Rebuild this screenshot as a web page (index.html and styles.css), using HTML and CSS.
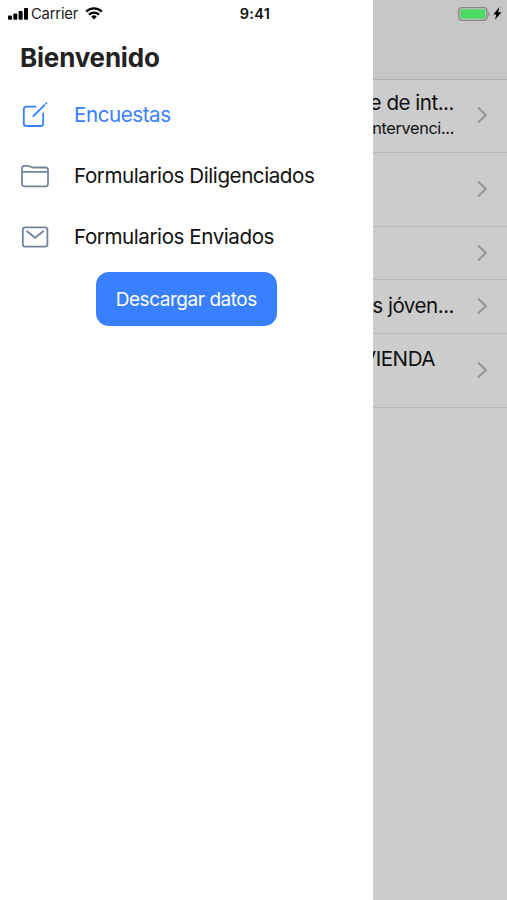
FILE: index.html
```
<!DOCTYPE html>
<html lang="es">
<head>
<meta charset="UTF-8">
<meta name="viewport" content="width=device-width, initial-scale=1.0">
<title>Bienvenido</title>
<link rel="stylesheet" href="styles.css">
</head>
<body>

<div class="statusbar">
  <div class="carrier">
    <svg class="signal" width="20" height="12" viewBox="0 0 20 12">
      <rect x="0" y="7.5" width="4" height="4.2" rx="1"/>
      <rect x="5.3" y="5.5" width="4" height="6.2" rx="1"/>
      <rect x="10.6" y="3" width="4" height="8.7" rx="1"/>
      <rect x="16" y="0" width="4" height="11.7" rx="1"/>
    </svg>
    <span>Carrier</span>
    <svg class="wifi" width="18" height="13" viewBox="0 0 18 13">
      <path d="M1.2 4.6a11 11 0 0 1 15.6 0M4 7.6a7.1 7.1 0 0 1 10 0" fill="none" stroke="#000" stroke-width="2.3"/>
      <path d="M9 12.4L6.2 9.7a4 4 0 0 1 5.6 0z"/>
    </svg>
  </div>
  <span class="time">9:41</span>
  <div class="power">
    <svg width="33" height="14" viewBox="0 0 33 14">
      <rect x=".7" y=".7" width="28.2" height="12.6" rx="3" fill="none" stroke="#858585" stroke-width="1.3"/>
      <rect x="2.3" y="2.3" width="25" height="9.4" rx="1.4" fill="#4cd964"/>
      <path d="M30.3 4.6c1.8.6 1.8 4.2 0 4.8z" fill="#858585"/>
    </svg>
    <svg width="9" height="13" viewBox="0 0 9 13">
      <path d="M6.4 0L.3 7.4h3L2 12.8 8.5 5.3H5.2z"/>
    </svg>
  </div>
</div>

<div class="app">
  <!-- Side menu -->
  <nav class="menu">
    <h1>Bienvenido</h1>
    <ul>
      <li class="active">
        <svg width="28" height="28" viewBox="0 0 28 28">
          <path d="M14.5 5.6H5.4A2.6 2.6 0 0 0 2.8 8.2v14.2A2.6 2.6 0 0 0 5.400 25H19.600a2.600 2.600 0 0 0 2.600-2.600v-10M12.400 15L23.400 4.200M25.100 2.500l.4-.4"/>
        </svg>
        <a href="#encuestas">Encuestas</a>
      </li>
      <li>
        <svg width="28" height="28" viewBox="0 0 28 28">
          <path d="M1 9V6.200a2.400 2.400 0 0 1 2.400-2.400h3.800c2 0 2.600 1.700 4.600 1.700h12.800A2.400 2.400 0 0 1 27 7.900V9M1 9.800h26M1 9v13a2.400 2.400 0 0 0 2.400 2.400h21.200A2.400 2.400 0 0 0 27 22V9"/>
        </svg>
        <a href="#diligenciados">Formularios Diligenciados</a>
      </li>
      <li>
        <svg width="28" height="28" viewBox="0 0 28 28">
          <rect x="1.800" y="4.400" width="24.600" height="19.200" rx="2.400"/>
          <path d="M6 8.200l8.100 6.500 8.100-6.500"/>
        </svg>
        <a href="#enviados">Formularios Enviados</a>
      </li>
    </ul>
    <button class="download">Descargar datos</button>
  </nav>

  <!-- Page behind the menu -->
  <main class="page">
    <div class="toolbar"></div>
    <div class="item tall">
      <div class="label"><p>e de int...</p><small>ntervenci...</small></div>
      <svg width="12" height="18" viewBox="0 0 12 18"><path d="M2 1.600L9.800 9 2 16.400"/></svg>
    </div>
    <div class="item tall">
      <svg width="12" height="18" viewBox="0 0 12 18"><path d="M2 1.600L9.800 9 2 16.400"/></svg>
    </div>
    <div class="item">
      <svg width="12" height="18" viewBox="0 0 12 18"><path d="M2 1.600L9.800 9 2 16.400"/></svg>
    </div>
    <div class="item">
      <div class="label"><p>os jóven...</p></div>
      <svg width="12" height="18" viewBox="0 0 12 18"><path d="M2 1.600L9.800 9 2 16.400"/></svg>
    </div>
    <div class="item tall top">
      <div class="label"><p>VIENDA</p></div>
      <svg width="12" height="18" viewBox="0 0 12 18"><path d="M2 1.600L9.800 9 2 16.400"/></svg>
    </div>
  </main>
</div>

</body>
</html>
```
FILE: styles.css
```
body {
  margin: 0;
  font-family: Inter, "Liberation Sans", sans-serif;
  color: #111;
  background-color: #fff;
}
/* Status bar lies over both the menu and the page */
.statusbar {
  position: absolute;
  top: 0;
  left: 0;
  width: 100%;
  height: 27px;
  box-sizing: border-box;
  padding: 0 5px 0 8px;
  display: grid;
  grid-template-columns: 1fr auto 1fr;
  align-items: center;
  z-index: 10;
}
.carrier {
  display: flex;
  align-items: center;
  font-size: 14.8px;
  color: #222;
  letter-spacing: -0.2px;
}
.signal {
  margin-right: 3px;
}
.wifi {
  margin-left: 7px;
}
.time {
  font-size: 14.5px;
  font-weight: 600;
  letter-spacing: 0.3px;
}
.power {
  display: flex;
  justify-content: flex-end;
  align-items: center;
  gap: 2px;
}
.app {
  display: grid;
  grid-template-columns: 372.6px 1fr;
  height: 900px;
}
.menu {
  background-color: #fff;
  padding-top: 43px;
  overflow: hidden;
}
.menu h1 {
  margin: 0 0 0 20px;
  font-size: 26px;
  line-height: 30px;
  font-weight: 700;
  letter-spacing: -0.2px;
  color: #222;
}
.menu ul {
  list-style-type: none;
  margin: 11px 0 0;
  padding: 0 0 0 21px;
}
.menu li {
  display: flex;
  align-items: center;
  gap: 25px;
  height: 61px;
}
.menu li a {
  font-size: 20.6px;
  letter-spacing: -0.44px;
  color: #111;
  text-decoration: none;
  white-space: nowrap;
}
.menu li svg {
  fill: none;
  stroke: #73849a;
  stroke-width: 1.8;
  stroke-linecap: round;
  stroke-linejoin: round;
}
.menu .active a {
  color: #3880ff;
}
.menu .active svg {
  stroke: #3880ff;
}
.download {
  display: block;
  width: 181px;
  height: 54px;
  margin: 5px auto 0;
  padding: 0;
  border: 0;
  border-radius: 13px;
  background-color: #3880ff;
  color: #fff;
  font-family: inherit;
  font-size: 19px;
  letter-spacing: -0.45px;
}
.page {
  background-color: #ccc;
  overflow: hidden;
}
.toolbar {
  height: 79.7px;
  box-sizing: border-box;
  background-color: #c6c6c6;
  border-bottom: 1px solid #b2b2b2;
}
.item {
  display: flex;
  justify-content: flex-end;
  align-items: center;
  height: 53.6px;
  box-sizing: border-box;
  padding: 0 19px 1px 0;
  border-bottom: 1px solid #bababa;
}
.item.tall {
  height: 73.6px;
}
.item svg {
  flex: none;
  fill: none;
  stroke: #949494;
  stroke-width: 2;
}
.label {
  flex: 1;
  display: flex;
  flex-direction: column;
  align-items: flex-end;
  margin-right: 22px;
  white-space: nowrap;
}
.label p {
  margin: 0;
  font-size: 20.6px;
  line-height: 26px;
  letter-spacing: -0.5px;
}
.label small {
  font-size: 16.3px;
  line-height: 24px;
  letter-spacing: -0.35px;
}
.top .label {
  align-self: flex-start;
  margin: 12px 41px 0 0;
}
```
